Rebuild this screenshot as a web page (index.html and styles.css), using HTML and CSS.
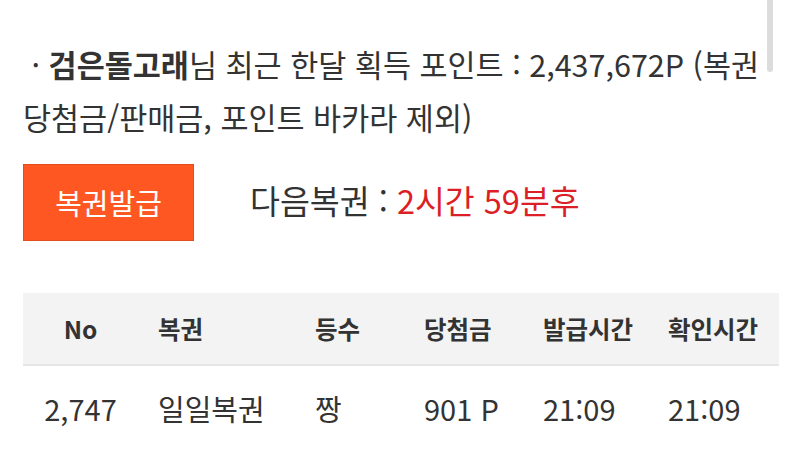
FILE: index.html
```html
<!DOCTYPE html>
<html lang="ko">
<head>
<meta charset="utf-8">
<link rel="stylesheet" href="styles.css">
</head>
<body>
<div class="page">
  <p class="info">&nbsp;·&nbsp;<b>검은돌고래</b>님 최근 한달 획득 포인트 : 2,437,672P (복권 당첨금/판매금, 포인트 바카라 제외)</p>
  <div class="issue">
    <div class="btn">복권발급</div>
    <div class="next">다음복권 : <span class="red">2시간 59분후</span></div>
  </div>
  <div class="table">
    <div class="row head">
      <div class="c c1">No</div>
      <div class="c">복권</div>
      <div class="c">등수</div>
      <div class="c">당첨금</div>
      <div class="c">발급시간</div>
      <div class="c">확인시간</div>
    </div>
    <div class="row body">
      <div class="c c1">2,747</div>
      <div class="c">일일복권</div>
      <div class="c">짱</div>
      <div class="c">901 P</div>
      <div class="c">21:09</div>
      <div class="c">21:09</div>
    </div>
  </div>
</div>
<div class="scrollbar"></div>
</body>
</html>
```
FILE: styles.css
```css
html, body {
  margin: 0;
  padding: 0;
  background: #fff;
}
body {
  width: 800px;
  height: 451px;
  overflow: hidden;
  font-family: "Noto Sans CJK KR", "Noto Sans", sans-serif;
  color: #333;
}
.page {
  padding: 38px 21px 0 23px;
}
.info {
  margin: 0;
  font-size: 30.5px;
  line-height: 53px;
  width: 752px;
}
.info b {
  font-weight: 700;
}
.issue {
  display: flex;
  align-items: center;
  margin-top: 20px;
  gap: 56px;
}
.btn {
  width: 169px;
  background: #ff5722;
  border: 1px solid #e24d1c;
  color: #fff;
  font-size: 29px;
  display: flex;
  align-items: center;
  justify-content: center;
  padding-bottom: 2px;
  box-sizing: content-box;
  height: 73px;
}
.next {
  font-size: 32.5px;
  padding-bottom: 6px;
}
.red {
  color: #dc1f26;
}
.table {
  margin-top: 52px;
  width: 756px;
}
.row {
  display: grid;
  grid-template-columns: 115px 157px 109px 119px 125px 1fr;
  align-items: center;
}
.head {
  height: 71px;
  background: #f3f3f3;
  border-bottom: 2px solid #e6e6e6;
  font-size: 24.5px;
  font-weight: 700;
}
.body {
  height: 84px;
  font-size: 29px;
}
.c {
  padding-left: 20px;
  white-space: nowrap;
}
.c1 {
  padding-left: 0;
  text-align: center;
}
.scrollbar {
  position: absolute;
  left: 767px;
  top: 0;
  width: 6px;
  height: 72px;
  background: #dcdcdc;
  border-radius: 0 0 3px 3px;
}
```
